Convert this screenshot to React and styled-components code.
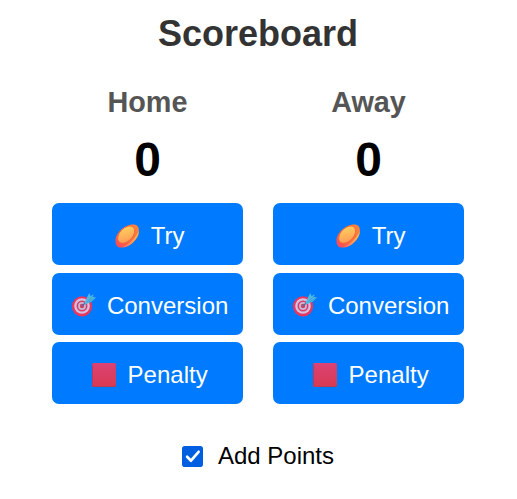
import React, { useState } from "react";
import styled, { createGlobalStyle } from "styled-components";

const GlobalStyle = createGlobalStyle`
  body {
    margin: 0;
    background: #fff;
    font-family: "Liberation Sans", Arial, sans-serif;
    color: #000;
  }
`;

const Page = styled.main`
  height: 499px;
  width: 516px;
  overflow: hidden;
  display: flex;
  flex-direction: column;
  align-items: center;
`;

const Title = styled.h1`
  margin: 13px 0 0;
  height: 41px;
  font-size: 36px;
  line-height: 41px;
  color: #333;
`;

const Teams = styled.div`
  display: grid;
  grid-template-columns: 191px 191px;
  column-gap: 30px;
  margin-top: 32px;
`;

const Team = styled.section`
  display: flex;
  flex-direction: column;
  align-items: center;
`;

const TeamName = styled.h2`
  margin: 0;
  font-size: 28.8px;
  line-height: 33px;
  color: #555;
`;

const Score = styled.div`
  margin-top: 13px;
  height: 56px;
  font-size: 48px;
  line-height: 56px;
  font-weight: bold;
`;

const Actions = styled.div`
  display: flex;
  flex-direction: column;
  gap: 7.5px;
  width: 100%;
  margin-top: 15px;
`;

const ActionButton = styled.button`
  display: flex;
  align-items: center;
  justify-content: center;
  gap: 7.3px;
  height: 62px;
  padding: 4px 14px 0 15px;
  border: 0;
  border-radius: 7px;
  background: #007bff;
  color: #fff;
  font: 24px/28px "Liberation Sans", Arial, sans-serif;
  white-space: nowrap;
  cursor: pointer;
`;

const Icon = styled.svg`
  flex: none;
  width: 32px;
  height: 26px;
  margin-bottom: 1px;
`;

const Option = styled.label`
  display: flex;
  align-items: center;
  gap: 15px;
  margin-top: 38px;
  height: 28px;
  font-size: 24px;
  line-height: 28px;
  cursor: pointer;
`;

const HiddenInput = styled.input`
  appearance: none;
  width: 0;
  height: 0;
  margin: 0 -15px 0 0;
`;

const CheckMark = styled.svg`
  width: 21px;
  height: 21px;
`;

function BallIcon({ id }) {
  return (
    <Icon viewBox="0 0 32 26">
      <defs>
        <linearGradient id={`${id}-rim`} x1="0" y1="1" x2="1" y2="0">
          <stop offset="0" stopColor="#ff4164" />
          <stop offset=".4" stopColor="#f6683f" />
          <stop offset="1" stopColor="#ff873c" />
        </linearGradient>
        <linearGradient id={`${id}-face`} x1="0" y1="1" x2="1" y2="0">
          <stop offset="0" stopColor="#ff9155" />
          <stop offset="1" stopColor="#ffda60" />
        </linearGradient>
        <linearGradient id={`${id}-side`} x1="0" y1="1" x2="1" y2="0">
          <stop offset="0" stopColor="#ff6c68" />
          <stop offset="1" stopColor="#ffca48" />
        </linearGradient>
      </defs>
      <path d="M4.6 18.4C3.4 11.2 13.3 1.4 22 1.4C26.2 1.4 28.2 3.7 27.9 8.2C27.4 16.2 19 24.5 10.2 24.5C6.6 24.5 4.6 22.3 4.6 18.4Z" fill={`url(#${id}-rim)`} />
      <path d="M27.9 8.3C27.4 16.2 19 24.5 10.8 24.5C17.8 21.6 24.5 15 27.9 8.3Z" fill={`url(#${id}-side)`} />
      <ellipse cx="15.2" cy="11.6" rx="10.3" ry="6.5" transform="rotate(-46 15.2 11.6)" fill={`url(#${id}-face)`} stroke="#f3653b" strokeWidth=".9" />
    </Icon>
  );
}

function TargetIcon() {
  return (
    <Icon viewBox="0 0 32 26">
      <circle cx="14" cy="14.4" r="10.1" fill="#e9365f" />
      <circle cx="14" cy="14" r="7.8" fill="#d3c2df" />
      <circle cx="14" cy="14" r="5.5" fill="#d83c6c" />
      <circle cx="14" cy="14" r="3.9" fill="#cdb9d5" />
      <circle cx="14" cy="14" r="2.2" fill="#ce4167" />
      <path d="M14 14L21 7.5" stroke="#526b9e" strokeWidth="1.4" />
      <path d="M17.2 9.3L19.2 5L21.3 1.1L22.6 4.2L25.5 2.2L25 5L28 5.6L23.8 9.4L19.2 11.8L16.8 12.2Z" fill="#4eb9e6" />
      <path d="M19 10.2L25.2 3.8M21 9.8L26.5 6" stroke="#388fbe" strokeWidth=".6" />
    </Icon>
  );
}

function CardIcon({ id }) {
  return (
    <Icon viewBox="0 0 32 26">
      <defs>
        <linearGradient id={id} x1="0" y1="0" x2="0" y2="1">
          <stop offset="0" stopColor="#dc4275" />
          <stop offset="1" stopColor="#d83a52" />
        </linearGradient>
      </defs>
      <rect x="4" y="1" width="24" height="24" rx="1.6" fill={`url(#${id})`} />
      <path d="M4.5 2.5V23Q4.5 24.5 6 24.5H26Q27.5 24.5 27.5 23" fill="none" stroke="#b83b5a" strokeWidth="1" />
      <path d="M27.3 2.5V22.5" stroke="#c9465f" strokeWidth=".7" />
    </Icon>
  );
}

function TeamPanel({ name, id, adding }) {
  const [score, setScore] = useState(0);
  const add = (points) => () =>
    setScore((s) => Math.max(0, s + (adding ? points : -points)));
  return (
    <Team>
      <TeamName>{name}</TeamName>
      <Score>{score}</Score>
      <Actions>
        <ActionButton onClick={add(5)}><BallIcon id={`${id}-ball`} />Try</ActionButton>
        <ActionButton onClick={add(2)}><TargetIcon />Conversion</ActionButton>
        <ActionButton onClick={add(3)}><CardIcon id={`${id}-card`} />Penalty</ActionButton>
      </Actions>
    </Team>
  );
}

export default function App() {
  const [adding, setAdding] = useState(true);
  return (
    <>
      <GlobalStyle />
      <Page>
        <Title>Scoreboard</Title>
        <Teams>
          <TeamPanel name="Home" id="home" adding={adding} />
          <TeamPanel name="Away" id="away" adding={adding} />
        </Teams>
        <Option>
          <HiddenInput type="checkbox" checked={adding} onChange={() => setAdding(!adding)} />
          <CheckMark viewBox="0 0 21 21">
            <rect width="21" height="21" rx="2.8" fill={adding ? "#005fe0" : "#999"} />
            {adding && <path d="M5.1 10.8L9 14.7L16.6 5.8" fill="none" stroke="#fff" strokeWidth="2.7" strokeLinecap="round" strokeLinejoin="round" />}
          </CheckMark>
          Add Points
        </Option>
      </Page>
    </>
  );
}
